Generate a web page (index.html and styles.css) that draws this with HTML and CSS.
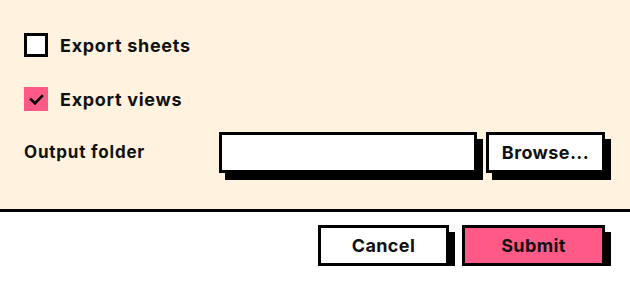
FILE: index.html
```html
<!DOCTYPE html>
<html lang="en">
<head>
  <meta charset="UTF-8" />
  <title>Export</title>
  <link rel="stylesheet" href="styles.css">
</head>
<body>
  <div class="panel">
    <label class="option">
      <span class="box"></span>
      <span>Export sheets</span>
    </label>
    <label class="option">
      <span class="box checked">
        <svg width="24" height="24" viewBox="0 0 24 24"><path d="M7 12.5 L11 16.5 L18 9" fill="none" stroke="#000" stroke-width="2.6" stroke-linecap="square"/></svg>
      </span>
      <span>Export views</span>
    </label>
    <div class="field">
      <span class="field-label">Output folder</span>
      <input type="text" class="path" />
      <button class="btn browse">Browse...</button>
    </div>
  </div>
  <div class="footer">
    <button class="btn cancel">Cancel</button>
    <button class="btn submit">Submit</button>
  </div>
</body>
</html>
```

FILE: styles.css
```css
body {
  margin: 0;
  font-family: Inter, "Noto Sans", sans-serif;
  color: #111;
  background: #fff;
}
.panel {
  background: #fff3e0;
  height: 176px;
  padding: 33px 25px 0 24px;
  border-bottom: 3px solid #000;
}
.option {
  display: flex;
  align-items: center;
  gap: 12px;
  height: 24px;
  margin-bottom: 30px;
  font-size: 18px;
  font-weight: 700;
  letter-spacing: 0.7px;
}
.option + .option {
  margin-bottom: 21px;
}
.box {
  width: 18px;
  height: 18px;
  border: 3px solid #000;
  background: #fff;
}
.box.checked {
  width: 24px;
  height: 24px;
  border: none;
  background: #ff5a87;
}
.box svg {
  display: block;
}
.field {
  display: flex;
  align-items: center;
  height: 41px;
}
.field-label {
  width: 195px;
  font-size: 17px;
  font-weight: 700;
  letter-spacing: 0.8px;
  margin-top: -2px;
}
.path {
  box-sizing: border-box;
  width: 258px;
  height: 41px;
  margin: 0 9px 0 0;
  border: 3px solid #000;
  background: #fff;
  box-shadow: 6px 7px 0 #000;
  outline: none;
}
.btn {
  box-sizing: border-box;
  height: 41px;
  border: 3px solid #000;
  background: #fff;
  box-shadow: 6px 7px 0 #000;
  font-family: Inter, "Noto Sans", sans-serif;
  font-size: 18px;
  font-weight: 700;
  letter-spacing: 0.4px;
  color: #111;
  padding: 0;
  cursor: pointer;
}
.browse {
  width: 119px;
}
.footer {
  display: flex;
  justify-content: flex-end;
  gap: 13px;
  padding: 13px 25px 0;
}
.cancel {
  width: 131px;
}
.submit {
  width: 143px;
  background: #ff5a87;
}
```
